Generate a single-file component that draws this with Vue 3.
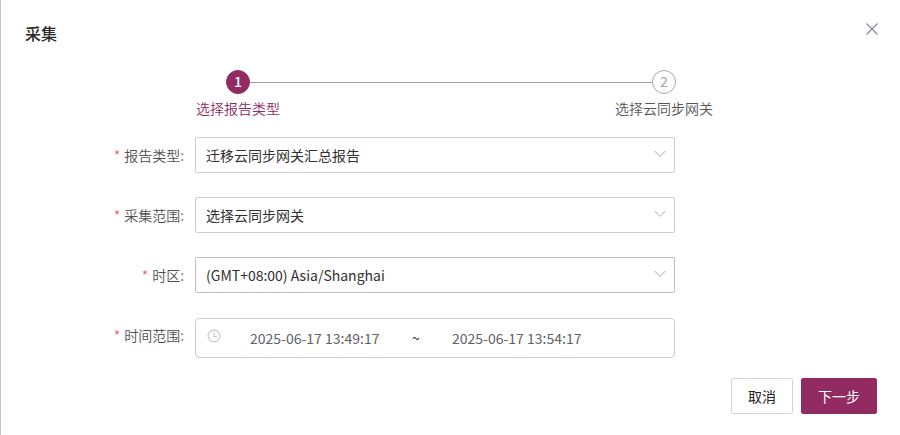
<script setup>
import { ref } from 'vue'

const fields = ref([
  { label: '报告类型', value: '迁移云同步网关汇总报告' },
  { label: '采集范围', value: '选择云同步网关' },
  { label: '时区', value: '(GMT+08:00) Asia/Shanghai', warm: true },
])
const start = ref('2025-06-17 13:49:17')
const end = ref('2025-06-17 13:54:17')
</script>

<template>
  <div class="dialog">
    <header class="header">
      <h1 class="title">采集</h1>
      <svg class="close" viewBox="0 0 12 12" width="12" height="12">
        <path d="M.5 .5 11.5 11.5M11.5 .5 .5 11.5" />
      </svg>
    </header>

    <div class="steps">
      <div class="step active">
        <span class="circle">1</span>
        <span class="step-label">选择报告类型</span>
      </div>
      <div class="line"></div>
      <div class="step">
        <span class="circle">2</span>
        <span class="step-label">选择云同步网关</span>
      </div>
    </div>

    <form class="form">
      <div v-for="f in fields" :key="f.label" class="row">
        <label class="label"><i class="star">*</i>{{ f.label }}:</label>
        <div class="select" :class="{ warm: f.warm }">
          <span>{{ f.value }}</span>
          <svg class="chevron" viewBox="0 0 12 8" width="12" height="8">
            <path d="M.7 1 6 6.3 11.3 1" />
          </svg>
        </div>
      </div>
      <div class="row time">
        <label class="label"><i class="star">*</i>时间范围:</label>
        <div class="range">
          <svg class="clock" viewBox="0 0 14 14" width="14" height="14">
            <circle cx="7" cy="7" r="5.9" />
            <path d="M7 3.5V7.5H10" />
          </svg>
          <span class="date">{{ start }}</span>
          <span class="tilde">~</span>
          <span class="date">{{ end }}</span>
        </div>
      </div>
    </form>

    <footer class="footer">
      <button class="btn" type="button">取消</button>
      <button class="btn primary" type="button">下一步</button>
    </footer>
  </div>
</template>

<style>
body {
  margin: 0;
  overflow: hidden;
}
</style>

<style scoped>
.dialog {
  box-sizing: border-box;
  width: 900px;
  height: 435px;
  border-left: 1px solid #c6c6c6;
  background: #fff;
  font-family: "Noto Sans CJK SC", sans-serif;
  font-size: 14px;
  line-height: 20px;
  color: #252b3a;
}
.header {
  display: flex;
  justify-content: space-between;
  height: 70px;
  padding: 21px 22px 0 24px;
  box-sizing: border-box;
}
.title {
  margin: 0;
  font-size: 16px;
  line-height: 24px;
  font-weight: 500;
  color: #2a2a2a;
}
.close {
  margin-top: 2px;
}
.close path {
  fill: none;
  stroke: #868a94;
  stroke-width: 1.2;
}
.steps {
  display: flex;
  justify-content: space-between;
  height: 67px;
  padding-left: 225px;
  width: 450px;
}
.step {
  display: flex;
  flex-direction: column;
  align-items: center;
  width: 24px;
  color: #555;
  white-space: nowrap;
}
.circle {
  box-sizing: border-box;
  width: 24px;
  height: 24px;
  border: 1px solid #a6a6a6;
  border-radius: 50%;
  line-height: 21px;
  text-align: center;
  color: #a0a0a0;
}
.step-label {
  margin-top: 4px;
  font-weight: 350;
}
.active {
  color: #912b62;
}
.active .circle {
  background: #912b62;
  border-color: #912b62;
  color: #fff;
  font-weight: 500;
}
.line {
  flex: 1;
  height: 1px;
  margin-top: 12px;
  background: #a0a0a0;
}
.row {
  display: flex;
  height: 36px;
  margin-bottom: 24px;
}
.row.time {
  height: 40px;
  margin: 25px 0 0;
}
.label {
  width: 183px;
  margin-right: 11px;
  text-align: right;
  line-height: 37px;
  font-weight: 350;
  color: #505050;
}
.time .label {
  line-height: 35px;
}
.star {
  margin-right: 4px;
  font-style: normal;
  font-weight: 400;
  color: #f56c6c;
}
.select,
.range {
  box-sizing: border-box;
  display: flex;
  align-items: center;
  width: 480px;
  border: 1px solid #cdcdcd;
  border-radius: 2px;
}
.select {
  justify-content: space-between;
  padding: 0 8px 0 10px;
  color: #303030;
}
.select.warm {
  border-color: #c6bdc2;
}
.chevron {
  margin-bottom: 3px;
}
.chevron path {
  fill: none;
  stroke: #c3c6ce;
  stroke-width: 1.1;
}
.range {
  padding-left: 11px;
  border-radius: 4px;
}
.clock {
  margin: 0 29px 5px 0;
}
.clock circle,
.clock path {
  fill: none;
  stroke: #c3c6ce;
  stroke-width: 1.1;
}
.date {
  width: 130px;
  color: #606266;
  white-space: nowrap;
}
.tilde {
  width: 72px;
  text-align: center;
  color: #303133;
}
.footer {
  display: flex;
  justify-content: flex-end;
  gap: 8px;
  padding: 20px 23px 0 0;
}
.btn {
  box-sizing: border-box;
  width: 62px;
  height: 36px;
  padding: 0;
  border: 1px solid #d5d5d5;
  border-radius: 2px;
  background: #fff;
  font: inherit;
  color: #222;
}
.btn.primary {
  width: 76px;
  border-color: #912b62;
  background: #912b62;
  color: #fff;
}
</style>
